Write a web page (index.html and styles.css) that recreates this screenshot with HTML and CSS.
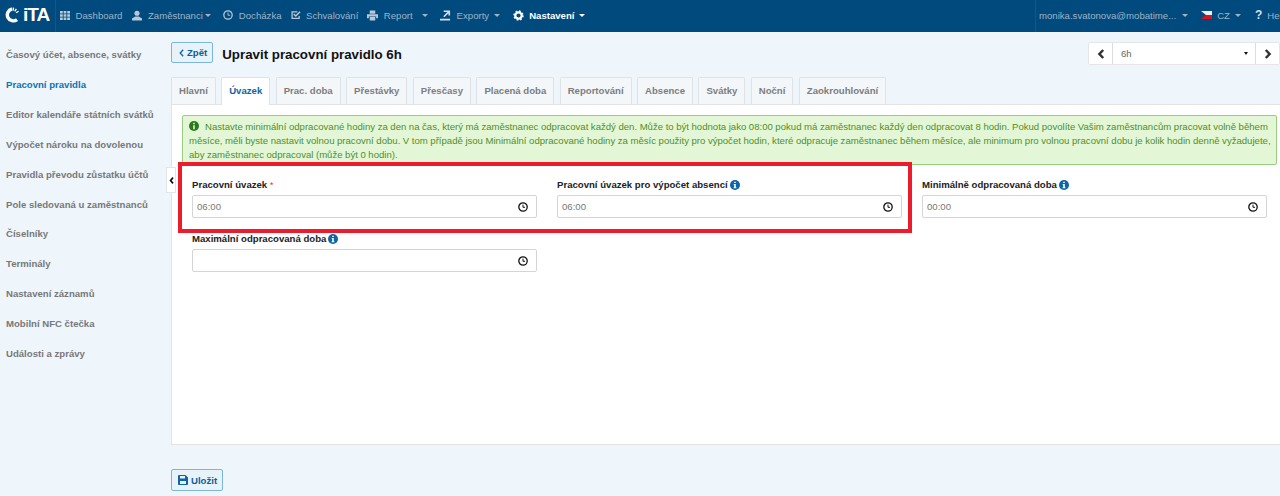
FILE: index.html
```html
<!DOCTYPE html>
<html lang="cs">
<head>
<meta charset="utf-8">
<title>Upravit pracovní pravidlo 6h</title>
<link rel="stylesheet" href="styles.css">
</head>
<body>
<header class="topbar">
  <div class="logo">
    <svg class="logo-c" width="17" height="16" viewBox="0 0 17 16"><path d="M13 12.600A6 6 0 1 1 8 2" fill="none" stroke="#fff" stroke-width="3.400"/><path d="M8.600 2l1.400.2M11 2.800l1.100.7M13 4.500l.7 1" fill="none" stroke="#fff" stroke-width="3"/></svg>
    <span class="logo-text">iTA</span>
  </div>
  <nav class="nav">
    <a class="nav-item first"><svg class="ni" width="10" height="9" viewBox="0 0 10 9"><path fill="#b8c8d6" d="M0 0h2.800v2.500H0zM3.600 0h2.800v2.500H3.600zM7.200 0H10v2.500H7.200zM0 3.200h2.800v2.500H0zM3.600 3.200h2.800v2.500H3.600zM7.200 3.200H10v2.500H7.200zM0 6.500h2.800V9H0zM3.600 6.500h2.800V9H3.600zM7.200 6.500H10V9H7.200z"/></svg>Dashboard</a>
    <a class="nav-item"><svg class="ni" width="10" height="11" viewBox="0 0 11 11"><circle cx="5.500" cy="3" r="2.800" fill="#b8c8d6"/><path fill="#b8c8d6" d="M0 11V8.800L3.600 6.600h3.800L11 8.800V11z"/></svg>Zaměstnanci<i class="caret tight"></i></a>
    <a class="nav-item"><svg class="ni" width="10" height="10" viewBox="0 0 11 11"><circle cx="5.500" cy="5.500" r="4.600" fill="none" stroke="#b8c8d6" stroke-width="1.400"/><path d="M5.500 2.800v3h2.400" fill="none" stroke="#b8c8d6"/></svg>Docházka</a>
    <a class="nav-item"><svg class="ni" width="10" height="10" viewBox="0 0 11 11"><path d="M9 6.500V9.200H1.200V2H7" fill="none" stroke="#b8c8d6" stroke-width="1.400"/><path d="M3 4.500l2.200 2.200L10 1.800" fill="none" stroke="#b8c8d6" stroke-width="1.600"/></svg>Schvalování</a>
    <a class="nav-item"><svg class="ni" width="11" height="11" viewBox="0 0 12 11"><path fill="#b8c8d6" d="M3 0h6v3.500H3zM0 4.200h12V8.400H10V6.500H2v1.900H0zM3 7.200h6V11H3z"/></svg>Report<i class="caret far"></i></a>
    <a class="nav-item"><svg class="ni" width="11" height="11" viewBox="0 0 12 11"><path fill="#d4dee7" d="M0 9h11v2H0zM4 0h7v5.600H9.200V3L4.800 7.400 3.600 6.200 8 1.800H4z"/></svg>Exporty<i class="caret"></i></a>
    <a class="nav-item active"><svg class="ni" width="11" height="11" viewBox="0 0 11 11"><circle cx="5.500" cy="5.500" r="3.200" fill="none" stroke="#fff" stroke-width="2.200"/><circle cx="5.500" cy="5.500" r="4.400" fill="none" stroke="#fff" stroke-width="1.600" stroke-dasharray="1.700 1.750"/></svg>Nastavení<i class="caret white"></i></a>
  </nav>
  <div class="user">
    <a class="user-mail">monika.svatonova@mobatime...<i class="caret"></i></a>
    <a class="lang"><svg class="flag" width="11" height="8" viewBox="0 0 11 8"><path fill="#eef0f6" d="M0 0h11v4H0z"/><path fill="#d7141a" d="M0 4h11v4H0z"/><path fill="#11457e" d="M0 0l5 4-5 4z"/></svg>CZ<i class="caret"></i></a>
    <a class="help"><b class="q">?</b>Help</a>
  </div>
</header>

<div class="layout">
  <aside class="sidebar">
    <a class="side-item">Časový účet, absence, svátky</a>
    <a class="side-item current">Pracovní pravidla</a>
    <a class="side-item">Editor kalendáře státních svátků</a>
    <a class="side-item">Výpočet nároku na dovolenou</a>
    <a class="side-item">Pravidla převodu zůstatku účtů</a>
    <a class="side-item">Pole sledovaná u zaměstnanců</a>
    <a class="side-item">Číselníky</a>
    <a class="side-item">Terminály</a>
    <a class="side-item">Nastavení záznamů</a>
    <a class="side-item">Mobilní NFC čtečka</a>
    <a class="side-item">Události a zprávy</a>
  </aside>

  <main class="content">
    <button class="collapse" aria-label="Sbalit"><svg width="5" height="7" viewBox="0 0 5 7"><path d="M4 .6L1.600 3.500 4 6.400" fill="none" stroke="#111" stroke-width="1.700"/></svg></button>
    <div class="head">
      <button class="btn"><svg width="5" height="8" viewBox="0 0 5 8"><path d="M4.200.8L1.200 4l3 3.200" fill="none" stroke="#0c65a6" stroke-width="1.300"/></svg>Zpět</button>
      <h1>Upravit pracovní pravidlo 6h</h1>
      <div class="pager">
        <span class="pg-btn"><svg width="8" height="10" viewBox="0 0 8 10"><path d="M6.200 1L2.400 5l3.800 4" fill="none" stroke="#333" stroke-width="2.500"/></svg></span>
        <span class="pg-select">6h<i class="mini-caret"></i></span>
        <span class="pg-btn"><svg width="8" height="10" viewBox="0 0 8 10"><path d="M1.800 1l3.800 4-3.800 4" fill="none" stroke="#333" stroke-width="2.500"/></svg></span>
      </div>
    </div>

    <div class="tabs">
      <a class="tab">Hlavní</a>
      <a class="tab on">Úvazek</a>
      <a class="tab">Prac. doba</a>
      <a class="tab">Přestávky</a>
      <a class="tab">Přesčasy</a>
      <a class="tab">Placená doba</a>
      <a class="tab">Reportování</a>
      <a class="tab">Absence</a>
      <a class="tab">Svátky</a>
      <a class="tab">Noční</a>
      <a class="tab">Zaokrouhlování</a>
    </div>

    <section class="panel">
      <div class="alert">
        <svg class="alert-ico" width="10" height="10" viewBox="0 0 10 10"><circle cx="5" cy="5" r="5" fill="#2c7a1b"/><path fill="#e2f6d3" d="M4.200 1.800h1.600v1.500H4.200zM4.200 4.200h1.600v4H4.200z"/></svg>Nastavte minimální odpracované hodiny za den na čas, který má zaměstnanec odpracovat každý den. Může to být hodnota jako 08:00 pokud má zaměstnanec každý den odpracovat 8 hodin. Pokud povolíte Vašim zaměstnancům pracovat volně během měsíce, měli byste nastavit volnou pracovní dobu. V tom případě jsou Minimální odpracované hodiny za měsíc použity pro výpočet hodin, které odpracuje zaměstnanec během měsíce, ale minimum pro volnou pracovní dobu je kolik hodin denně vyžadujete, aby zaměstnanec odpracoval (může být 0 hodin).
      </div>
      <div class="form">
        <div class="field">
          <label>Pracovní úvazek <span class="req">*</span></label>
          <div class="input"><span>06:00</span><svg class="clock" width="10" height="10" viewBox="0 0 10 10"><circle cx="5" cy="5" r="4.200" fill="none" stroke="#111" stroke-width="1.300"/><path d="M5 2.600v2.700h2" fill="none" stroke="#111"/></svg></div>
        </div>
        <div class="field">
          <label>Pracovní úvazek pro výpočet absencí<svg class="info" width="10" height="10" viewBox="0 0 10 10"><circle cx="5" cy="5" r="5" fill="#0c65a6"/><path fill="#fff" d="M4.200 1.700h1.600v1.400H4.200zM3.700 4h2.100v3.200h.6v1H3.600v-1h.6V5h-.5z"/></svg></label>
          <div class="input"><span>06:00</span><svg class="clock" width="10" height="10" viewBox="0 0 10 10"><circle cx="5" cy="5" r="4.200" fill="none" stroke="#111" stroke-width="1.300"/><path d="M5 2.600v2.700h2" fill="none" stroke="#111"/></svg></div>
        </div>
        <div class="field">
          <label>Minimálně odpracovaná doba<svg class="info" width="10" height="10" viewBox="0 0 10 10"><circle cx="5" cy="5" r="5" fill="#0c65a6"/><path fill="#fff" d="M4.200 1.700h1.600v1.400H4.200zM3.700 4h2.100v3.200h.6v1H3.600v-1h.6V5h-.5z"/></svg></label>
          <div class="input"><span>00:00</span><svg class="clock" width="10" height="10" viewBox="0 0 10 10"><circle cx="5" cy="5" r="4.200" fill="none" stroke="#111" stroke-width="1.300"/><path d="M5 2.600v2.700h2" fill="none" stroke="#111"/></svg></div>
        </div>
        <div class="field">
          <label>Maximální odpracovaná doba<svg class="info" width="10" height="10" viewBox="0 0 10 10"><circle cx="5" cy="5" r="5" fill="#0c65a6"/><path fill="#fff" d="M4.200 1.700h1.600v1.400H4.200zM3.700 4h2.100v3.200h.6v1H3.600v-1h.6V5h-.5z"/></svg></label>
          <div class="input"><span></span><svg class="clock" width="10" height="10" viewBox="0 0 10 10"><circle cx="5" cy="5" r="4.200" fill="none" stroke="#111" stroke-width="1.300"/><path d="M5 2.600v2.700h2" fill="none" stroke="#111"/></svg></div>
        </div>
      </div>
      <div class="highlight"></div>
    </section>

    <button class="btn save"><svg width="10" height="10" viewBox="0 0 10 10"><path fill="#0c65a6" fill-rule="evenodd" d="M0 1a1 1 0 011-1h6.500L10 2.500V9a1 1 0 01-1 1H1a1 1 0 01-1-1zM2 1v2.600h5V1zM2 6v3h6V6z"/></svg>Uložit</button>
  </main>
</div>
</body>
</html>
```
FILE: styles.css
```css
* { box-sizing: border-box; }
html, body { margin: 0; height: 496px; overflow: hidden; }
body {
  background: #eef6fc;
  font-family: "Liberation Sans", Arial, sans-serif;
  font-size: 9.6px;
  color: #333;
}
.topbar {
  display: flex;
  align-items: center;
  height: 32px;
  padding-bottom: 2px;
  background: #004a7d;
  color: #9fb4c7;
  overflow: hidden;
  white-space: nowrap;
}
.logo {
  width: 56px;
  height: 32px;
  margin-bottom: -2px;
  padding: 0 0 2px 4px;
  flex: none;
  display: flex;
  align-items: center;
  border-right: 1px solid #0a5a90;
}
.logo-c { flex: none; }
.logo-text {
  font-size: 19px;
  font-weight: 700;
  color: #fff;
  margin-left: 2px;
  letter-spacing: -1px;
}
.nav { display: flex; align-items: center; flex: 1; padding-left: 4px; }
.nav-item { display: flex; align-items: center; margin-right: 9px; }
.nav-item.first { margin-right: 10px; }
.nav-item:has(.caret) { margin-right: 12.5px; }
.ni { margin-right: 5.5px; flex: none; }
.nav-item.active { color: #fff; font-weight: 700; }
.caret {
  display: inline-block;
  width: 0;
  height: 0;
  margin-left: 5px;
  border: 3px solid transparent;
  border-top: 3px solid #9fb4c7;
  border-bottom: 0;
}
.caret.tight { margin-left: 2px; }
.caret.far { margin-left: 9px; }
.caret.white { border-top-color: #fff; }
.user {
  display: flex;
  align-items: center;
  height: 32px;
  margin-bottom: -2px;
  padding: 0 0 2px 3px;
  width: 245px;
  flex: none;
  border-left: 1px solid #0a5a90;
}
.user-mail { display: flex; align-items: center; margin-right: 13px; }
.user-mail .caret { margin-left: 6px; }
.lang { display: flex; align-items: center; margin-right: 14px; }
.flag { margin-right: 5px; }
.help { display: flex; align-items: center; }
.q { color: #d4dee7; font-size: 12px; margin-right: 5px; }

.layout { display: flex; height: 464px; }
.sidebar {
  width: 171px;
  flex: none;
  display: flex;
  flex-direction: column;
  padding: 8px 0 0 6px;
}
.side-item {
  height: 29.9px;
  line-height: 29.9px;
  font-weight: 700;
  color: #787878;
  white-space: nowrap;
}
.side-item.current { color: #0c72b5; height: 30px; line-height: 30px; }

.content { flex: 1; min-width: 0; position: relative; }
.collapse {
  position: absolute;
  left: -5px;
  top: 135px;
  width: 10px;
  height: 26px;
  padding: 0;
  background: #fff;
  border: 1px solid #e2e6e9;
  display: flex;
  align-items: center;
  justify-content: center;
  z-index: 3;
}
.head { display: flex; align-items: flex-start; height: 45px; padding-top: 10px; }
.btn {
  display: inline-flex;
  align-items: center;
  gap: 3px;
  height: 21px;
  padding: 0 5px 0 7px;
  background: #e8f2f9;
  border: 1px solid #7ab6de;
  border-radius: 2px;
  font: 700 9.6px "Liberation Sans", Arial, sans-serif;
  color: #0c5f9c;
}
h1 {
  margin: 0 0 0 9px;
  flex: 1;
  font-size: 13.3px;
  line-height: 25px;
  font-weight: 700;
  color: #111;
}
.pager {
  display: flex;
  width: 192px;
  height: 23px;
  background: #fff;
  border: 1px solid #e6e6e6;
  border-radius: 2px;
  color: #666;
}
.pg-btn { width: 23px; flex: none; display: flex; align-items: center; justify-content: center; }
.pg-select {
  flex: 1;
  display: flex;
  align-items: center;
  justify-content: space-between;
  padding: 0 7px 0 8px;
  border-left: 1px solid #ddd;
  border-right: 1px solid #ddd;
}
.mini-caret {
  width: 0;
  height: 0;
  border: 2px solid transparent;
  border-top: 3px solid #111;
  border-bottom: 0;
}

.tabs { display: flex; gap: 5.4px; height: 27px; align-items: flex-end; }
.tab {
  height: 27px;
  line-height: 26px;
  padding: 0 7px;
  background: #f3f7fa;
  border: 1px solid #dfe3e6;
  border-bottom: 0;
  border-radius: 2px 2px 0 0;
  font-weight: 700;
  color: #7d7d7d;
  white-space: nowrap;
}
.tab.on { background: #fff; color: #0c65a6; position: relative; z-index: 1; height: 28px; margin-bottom: -1px; }

.panel {
  position: relative;
  height: 341px;
  padding: 10px 3px 0 11px;
  background: #fff;
  border-top: 1px solid #e3e3e3;
  border-bottom: 1px solid #e3e3e3;
  border-left: 1px solid #e3e3e3;
}
.alert {
  height: 50px;
  padding: 4px 1px 0 6px;
  background: #e3f7d6;
  border: 1px solid #99cc80;
  border-radius: 2px;
  color: #4f8f2a;
  font-size: 9.58px;
  word-spacing: -0.1px;
  line-height: 14px;
  margin-left: -1px;
}
.alert-ico { vertical-align: -1px; margin: 0 6px 0 0; }
.form {
  display: grid;
  grid-template-columns: repeat(3, 345px);
  column-gap: 20px;
  padding: 13px 0 0 9px;
}
.field { height: 54px; }
label {
  display: flex;
  align-items: center;
  height: 17px;
  padding-bottom: 4px;
  font-weight: 700;
  color: #222;
  white-space: pre;
}
.req { color: #e33; font-weight: 400; }
.info { margin-left: 2px; }
.input {
  display: flex;
  align-items: center;
  justify-content: space-between;
  height: 23px;
  padding: 0 8px 0 4px;
  border: 1px solid #d5d5d5;
  border-radius: 2px;
  background: #fff;
  color: #777;
}
.highlight {
  position: absolute;
  left: 6px;
  top: 57px;
  width: 734px;
  height: 71px;
  border: 4px solid #ec1c2d;
  pointer-events: none;
}
.save { position: absolute; left: 0; top: 437px; height: 22px; padding: 0 5px 0 6px; }
```
